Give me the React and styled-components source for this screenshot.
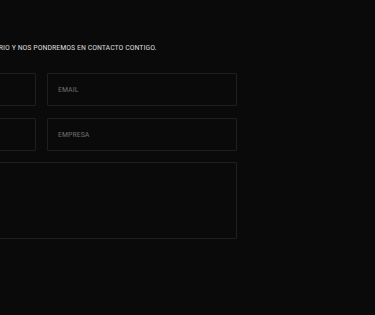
import React from "react";
import styled, { createGlobalStyle } from "styled-components";

const Global = createGlobalStyle`
  html, body { margin: 0; padding: 0; background: #0a0a0a; }
  body { font-family: "Roboto Condensed", Roboto, "Liberation Sans", sans-serif; }
`;

const Page = styled.div`
  width: 375px;
  height: 315px;
  overflow: hidden;
  background: #0a0a0a;
`;

const Section = styled.section`
  width: 391px;
  margin-left: -154px;
  padding-top: 44px;
`;

const Intro = styled.p`
  margin: 0 0 21px;
  text-align: center;
  font-size: 8px;
  line-height: 8px;
  letter-spacing: -0.02px;
  color: #d4d4d4;
  text-transform: uppercase;
`;

const Form = styled.form`
  display: grid;
  grid-template-columns: 1fr 1fr;
  column-gap: 11px;
  row-gap: 12px;
`;

const Field = styled.input`
  box-sizing: border-box;
  min-width: 0;
  height: 33px;
  padding: 0 10px;
  background: transparent;
  border: 1px solid #1f1f1f;
  border-radius: 1px;
  outline: none;
  font-family: inherit;
  font-size: 8px;
  color: #ccc;
  text-transform: uppercase;
  &::placeholder { color: #6a6a6a; }
`;

const Message = styled.textarea`
  grid-column: 1 / -1;
  box-sizing: border-box;
  height: 77px;
  margin-top: -1px;
  background: transparent;
  border: 1px solid #1f1f1f;
  border-radius: 1px;
  resize: none;
  outline: none;
  padding: 10px;
  font-family: inherit;
  font-size: 8px;
  color: #ccc;
  &::placeholder { color: #6a6a6a; }
`;

export default function App() {
  return (
    <Page>
      <Global />
      <Section>
        <Intro>Rellena el formulario y nos pondremos en contacto contigo.</Intro>
        <Form onSubmit={(e) => e.preventDefault()}>
          <Field placeholder="Nombre" />
          <Field placeholder="Email" />
          <Field placeholder="Teléfono" />
          <Field placeholder="Empresa" />
          <Message placeholder="" />
        </Form>
      </Section>
    </Page>
  );
}
